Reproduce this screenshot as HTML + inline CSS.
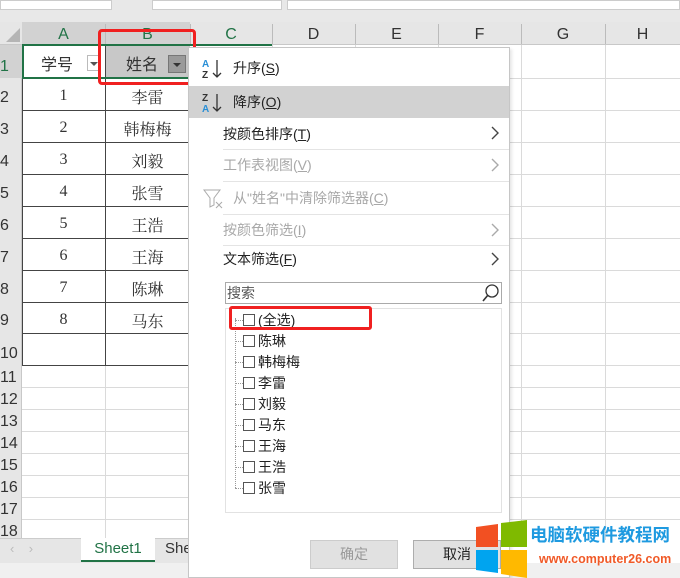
<!DOCTYPE html>
<html><head><meta charset="utf-8"><style>
*{margin:0;padding:0;box-sizing:border-box}
body{width:680px;height:578px;overflow:hidden;background:#fff;font-family:"Liberation Sans","Noto Sans CJK SC",sans-serif;position:relative}
.a{position:absolute}
.hl{position:absolute;height:1px;background:#dadada}
.vl{position:absolute;width:1px;background:#dadada}
.ch{position:absolute;top:22px;height:23px;line-height:25px;text-align:center;font-size:16px;color:#333}
.rn{position:absolute;left:0;width:22px;font-size:16px;color:#333;text-align:left;padding-left:0}
.cell{position:absolute;text-align:center;font-size:16px;color:#333;font-family:"Liberation Serif","Noto Serif CJK SC",serif}
.mi{position:absolute;left:223px;font-size:14px;color:#222}
.dis{color:#a8a8a8}
.arr{position:absolute;left:490px}
.li{position:absolute;left:243px;font-size:14px;color:#222;height:20px;line-height:20px}
.li i{display:inline-block;width:12px;height:12px;border:1px solid #555;margin-right:3px;vertical-align:-1px;background:#fff}
</style></head><body>
<div class="a" style="left:0;top:0;width:680px;height:22px;background:#e8e8e8"></div>
<div class="a" style="left:0;top:0;width:112px;height:10px;background:#fff;border:1px solid #ccc"></div>
<div class="a" style="left:152px;top:0;width:130px;height:10px;background:#fff;border:1px solid #ccc"></div>
<div class="a" style="left:287px;top:0;width:393px;height:10px;background:#fff;border:1px solid #ccc"></div>
<div class="a" style="left:0;top:22px;width:680px;height:23px;background:#e6e6e6;border-bottom:1px solid #c8c8c8"></div>
<div class="a" style="left:22px;top:22px;width:168px;height:23px;background:#d2d2d2"></div>
<div class="a" style="left:0;top:45px;width:22px;height:495px;background:#e6e6e6;border-right:1px solid #c8c8c8"></div>
<div class="a" style="left:0;top:45px;width:22px;height:33px;background:#d2d2d2"></div>
<svg class="a" style="left:4px;top:26px" width="16" height="16"><polygon points="16,2 16,16 2,16" fill="#b5b5b5"/></svg>
<div class="ch" style="left:22px;width:83px;color:#217346">A</div>
<div class="ch" style="left:105px;width:85px;color:#217346">B</div>
<div class="ch" style="left:190px;width:82px;color:#217346">C</div>
<div class="ch" style="left:272px;width:83px">D</div>
<div class="ch" style="left:355px;width:83px">E</div>
<div class="ch" style="left:438px;width:83px">F</div>
<div class="ch" style="left:521px;width:84px">G</div>
<div class="ch" style="left:605px;width:75px">H</div>
<div class="vl" style="left:105px;top:24px;height:20px;background:#bbb"></div>
<div class="vl" style="left:190px;top:24px;height:20px;background:#bbb"></div>
<div class="vl" style="left:272px;top:24px;height:20px;background:#bbb"></div>
<div class="vl" style="left:355px;top:24px;height:20px;background:#bbb"></div>
<div class="vl" style="left:438px;top:24px;height:20px;background:#bbb"></div>
<div class="vl" style="left:521px;top:24px;height:20px;background:#bbb"></div>
<div class="vl" style="left:605px;top:24px;height:20px;background:#bbb"></div>
<div class="vl" style="left:355px;top:45px;height:495px"></div>
<div class="vl" style="left:438px;top:45px;height:495px"></div>
<div class="vl" style="left:521px;top:45px;height:495px"></div>
<div class="vl" style="left:605px;top:45px;height:495px"></div>
<div class="vl" style="left:272px;top:45px;height:495px"></div>
<div class="vl" style="left:105px;top:365px;height:175px"></div>
<div class="hl" style="left:22px;top:78px;width:658px"></div>
<div class="hl" style="left:22px;top:110px;width:658px"></div>
<div class="hl" style="left:22px;top:142px;width:658px"></div>
<div class="hl" style="left:22px;top:174px;width:658px"></div>
<div class="hl" style="left:22px;top:206px;width:658px"></div>
<div class="hl" style="left:22px;top:238px;width:658px"></div>
<div class="hl" style="left:22px;top:270px;width:658px"></div>
<div class="hl" style="left:22px;top:302px;width:658px"></div>
<div class="hl" style="left:22px;top:333px;width:658px"></div>
<div class="hl" style="left:22px;top:365px;width:658px"></div>
<div class="hl" style="left:22px;top:387px;width:658px"></div>
<div class="hl" style="left:22px;top:409px;width:658px"></div>
<div class="hl" style="left:22px;top:431px;width:658px"></div>
<div class="hl" style="left:22px;top:453px;width:658px"></div>
<div class="hl" style="left:22px;top:475px;width:658px"></div>
<div class="hl" style="left:22px;top:497px;width:658px"></div>
<div class="hl" style="left:22px;top:519px;width:658px"></div>
<div class="a" style="left:22px;top:78px;width:168px;height:288px;border-left:1px solid #444;border-bottom:1px solid #444"></div>
<div class="a" style="left:105px;top:45px;width:1px;height:321px;background:#444"></div>
<div class="a" style="left:22px;top:110px;width:168px;height:1px;background:#444"></div>
<div class="a" style="left:22px;top:142px;width:168px;height:1px;background:#444"></div>
<div class="a" style="left:22px;top:174px;width:168px;height:1px;background:#444"></div>
<div class="a" style="left:22px;top:206px;width:168px;height:1px;background:#444"></div>
<div class="a" style="left:22px;top:238px;width:168px;height:1px;background:#444"></div>
<div class="a" style="left:22px;top:270px;width:168px;height:1px;background:#444"></div>
<div class="a" style="left:22px;top:302px;width:168px;height:1px;background:#444"></div>
<div class="a" style="left:22px;top:333px;width:168px;height:1px;background:#444"></div>
<div class="a" style="left:22px;top:78px;width:168px;height:1px;background:#444"></div>
<div class="a" style="left:106px;top:45px;width:84px;height:33px;background:#c8c8c8"></div>
<div class="a" style="left:22px;top:44px;width:250px;height:35px;border:2px solid #217346;border-right:none"></div>
<div class="cell" style="left:22px;top:51px;width:70px;font-family:'Noto Sans CJK SC',sans-serif">学号</div>
<div class="a" style="left:87px;top:55px;width:14px;height:16px;background:#fff;border:1px solid #bbb"></div>
<svg class="a" style="left:90px;top:62px" width="8" height="4"><polygon points="0,0 8,0 4,4" fill="#555"/></svg>
<div class="cell" style="left:106px;top:51px;width:72px;font-family:'Noto Sans CJK SC',sans-serif">姓名</div>
<div class="a" style="left:168px;top:55px;width:18px;height:18px;background:#9a9a9a;border:1px solid #777"></div>
<svg class="a" style="left:173px;top:63px" width="8" height="4"><polygon points="0,0 8,0 4,4" fill="#333"/></svg>
<div class="a" style="left:98px;top:29px;width:98px;height:56px;border:3px solid #f02020;border-radius:4px"></div>
<div class="rn" style="top:58px;color:#217346">1</div>
<div class="rn" style="top:89px">2</div>
<div class="rn" style="top:121px">3</div>
<div class="rn" style="top:153px">4</div>
<div class="rn" style="top:185px">5</div>
<div class="rn" style="top:217px">6</div>
<div class="rn" style="top:249px">7</div>
<div class="rn" style="top:281px">8</div>
<div class="rn" style="top:312px">9</div>
<div class="rn" style="top:345px">10</div>
<div class="rn" style="top:369px">11</div>
<div class="rn" style="top:391px">12</div>
<div class="rn" style="top:413px">13</div>
<div class="rn" style="top:435px">14</div>
<div class="rn" style="top:457px">15</div>
<div class="rn" style="top:479px">16</div>
<div class="rn" style="top:501px">17</div>
<div class="rn" style="top:523px">18</div>
<div class="cell" style="left:22px;top:87px;width:83px">1</div><div class="cell" style="left:105px;top:85px;width:85px">李雷</div>
<div class="cell" style="left:22px;top:119px;width:83px">2</div><div class="cell" style="left:105px;top:117px;width:85px">韩梅梅</div>
<div class="cell" style="left:22px;top:151px;width:83px">3</div><div class="cell" style="left:105px;top:149px;width:85px">刘毅</div>
<div class="cell" style="left:22px;top:183px;width:83px">4</div><div class="cell" style="left:105px;top:181px;width:85px">张雪</div>
<div class="cell" style="left:22px;top:215px;width:83px">5</div><div class="cell" style="left:105px;top:213px;width:85px">王浩</div>
<div class="cell" style="left:22px;top:247px;width:83px">6</div><div class="cell" style="left:105px;top:245px;width:85px">王海</div>
<div class="cell" style="left:22px;top:279px;width:83px">7</div><div class="cell" style="left:105px;top:277px;width:85px">陈琳</div>
<div class="cell" style="left:22px;top:311px;width:83px">8</div><div class="cell" style="left:105px;top:309px;width:85px">马东</div>
<div class="a" style="left:0;top:538px;width:190px;height:25px;background:#e6e6e6;border-top:1px solid #ccc"></div>
<div class="a" style="left:10px;top:541px;font-size:13px;color:#bbb">‹&nbsp;&nbsp;&nbsp;&nbsp;›</div>
<div class="a" style="left:81px;top:538px;width:74px;height:24px;background:#fff;border-bottom:2px solid #217346;color:#217346;font-size:15px;text-align:center;line-height:22px">Sheet1</div>
<div class="a" style="left:155px;top:538px;width:35px;height:24px;font-size:15px;color:#333;line-height:22px;padding-left:10px;overflow:hidden;white-space:nowrap">Sheet2</div>
<div class="a" style="left:0;top:563px;width:680px;height:15px;background:#f0f0f0"></div>
<div class="a" style="left:188px;top:47px;width:322px;height:531px;background:#fff;border:1px solid #c6c6c6;box-shadow:2px 2px 3px rgba(0,0,0,.1)"></div>
<div class="a" style="left:189px;top:86px;width:320px;height:32px;background:#d2d2d2"></div>
<div class="hl" style="left:223px;top:149px;width:286px;background:#e4e4e4"></div>
<div class="hl" style="left:223px;top:181px;width:286px;background:#e4e4e4"></div>
<div class="hl" style="left:223px;top:214px;width:286px;background:#e4e4e4"></div>
<div class="hl" style="left:223px;top:245px;width:286px;background:#e4e4e4"></div>
<svg class="a" style="left:202px;top:57px" width="22" height="24"><text x="0" y="10" font-size="10" font-family="Liberation Sans" fill="#2a8fd6" font-weight="bold">A</text><text x="0" y="21" font-size="10" font-family="Liberation Sans" fill="#333" font-weight="bold">Z</text><path d="M15 3V20M11 16L15 20L19 16" stroke="#333" stroke-width="1.3" fill="none"/></svg>
<svg class="a" style="left:202px;top:91px" width="22" height="24"><text x="0" y="10" font-size="10" font-family="Liberation Sans" fill="#333" font-weight="bold">Z</text><text x="0" y="21" font-size="10" font-family="Liberation Sans" fill="#2a8fd6" font-weight="bold">A</text><path d="M15 3V20M11 16L15 20L19 16" stroke="#333" stroke-width="1.3" fill="none"/></svg>
<div class="mi" style="left:233px;top:58px"><span>升序(<u>S</u>)</span></div>
<div class="mi" style="left:233px;top:92px">降序(<u>O</u>)</div>
<div class="mi" style="top:124px">按颜色排序(<u>T</u>)</div>
<svg class="arr" style="top:125px" width="10" height="16"><path d="M2 2L8 8L2 14" stroke="#444" stroke-width="1.4" fill="none"/></svg>
<div class="mi dis" style="top:155px">工作表视图(<u>V</u>)</div>
<svg class="arr" style="top:157px" width="10" height="16"><path d="M2 2L8 8L2 14" stroke="#aaa" stroke-width="1.4" fill="none"/></svg>
<svg class="a" style="left:203px;top:188px" width="22" height="22"><path d="M1 2H17L11 10V17L7 19V10Z" stroke="#aaa" fill="none"/><path d="M13 14L19 20M19 14L13 20" stroke="#aaa"/></svg>
<div class="mi dis" style="left:233px;top:188px">从"姓名"中清除筛选器(<u>C</u>)</div>
<div class="mi dis" style="top:220px">按颜色筛选(<u>I</u>)</div>
<svg class="arr" style="top:222px" width="10" height="16"><path d="M2 2L8 8L2 14" stroke="#aaa" stroke-width="1.4" fill="none"/></svg>
<div class="mi" style="top:249px">文本筛选(<u>F</u>)</div>
<svg class="arr" style="top:251px" width="10" height="16"><path d="M2 2L8 8L2 14" stroke="#444" stroke-width="1.4" fill="none"/></svg>
<div class="a" style="left:225px;top:282px;width:277px;height:22px;border:1px solid #aaa"></div>
<div class="a" style="left:227px;top:283px;font-size:14px;color:#555">搜索</div>
<svg class="a" style="left:481px;top:283px" width="20" height="20"><circle cx="11" cy="8" r="6" stroke="#333" stroke-width="1.3" fill="none"/><path d="M7 12L2 18" stroke="#333" stroke-width="1.6"/></svg>
<div class="a" style="left:225px;top:308px;width:277px;height:205px;border:1px solid #e2e2e2"></div>
<div class="a" style="left:235px;top:318px;width:1px;height:170px;border-left:1px dotted #999"></div>
<div class="a" style="left:235px;top:320px;width:8px;border-top:1px dotted #999"></div>
<div class="a" style="left:235px;top:341px;width:8px;border-top:1px dotted #999"></div>
<div class="a" style="left:235px;top:362px;width:8px;border-top:1px dotted #999"></div>
<div class="a" style="left:235px;top:383px;width:8px;border-top:1px dotted #999"></div>
<div class="a" style="left:235px;top:404px;width:8px;border-top:1px dotted #999"></div>
<div class="a" style="left:235px;top:425px;width:8px;border-top:1px dotted #999"></div>
<div class="a" style="left:235px;top:446px;width:8px;border-top:1px dotted #999"></div>
<div class="a" style="left:235px;top:467px;width:8px;border-top:1px dotted #999"></div>
<div class="a" style="left:235px;top:488px;width:8px;border-top:1px dotted #999"></div>
<div class="li" style="top:310px"><i></i>(全选)</div>
<div class="li" style="top:331px"><i></i>陈琳</div>
<div class="li" style="top:352px"><i></i>韩梅梅</div>
<div class="li" style="top:373px"><i></i>李雷</div>
<div class="li" style="top:394px"><i></i>刘毅</div>
<div class="li" style="top:415px"><i></i>马东</div>
<div class="li" style="top:436px"><i></i>王海</div>
<div class="li" style="top:457px"><i></i>王浩</div>
<div class="li" style="top:478px"><i></i>张雪</div>
<div class="a" style="left:229px;top:306px;width:143px;height:24px;border:3px solid #f02020;border-radius:3px"></div>
<div class="a" style="left:310px;top:540px;width:88px;height:29px;background:#e1e1e1;border:1px solid #ccc;text-align:center;line-height:27px;font-size:14px;color:#999">确定</div>
<div class="a" style="left:413px;top:540px;width:88px;height:29px;background:#e1e1e1;border:1px solid #adadad;text-align:center;line-height:27px;font-size:14px;color:#222">取消</div>
<svg class="a" style="left:476px;top:520px" width="60" height="58"><polygon points="0,7 22,4 22,27 0,27" fill="#f25022"/><polygon points="25,3 51,0 51,27 25,27" fill="#7fba00"/><polygon points="0,30 22,30 22,53 0,50" fill="#00a4ef"/><polygon points="25,30 51,30 51,58 25,54" fill="#ffb900"/></svg>
<div class="a" style="left:530px;top:523px;font-size:17.5px;font-weight:bold;color:#1e9ae0;white-space:nowrap;font-family:'Noto Sans CJK SC',sans-serif;line-height:24px">电脑软硬件教程网</div>
<div class="a" style="left:539px;top:551px;font-size:12.5px;font-weight:bold;color:#f05a28;line-height:16px;white-space:nowrap">www.computer26.com</div>
</body></html>
